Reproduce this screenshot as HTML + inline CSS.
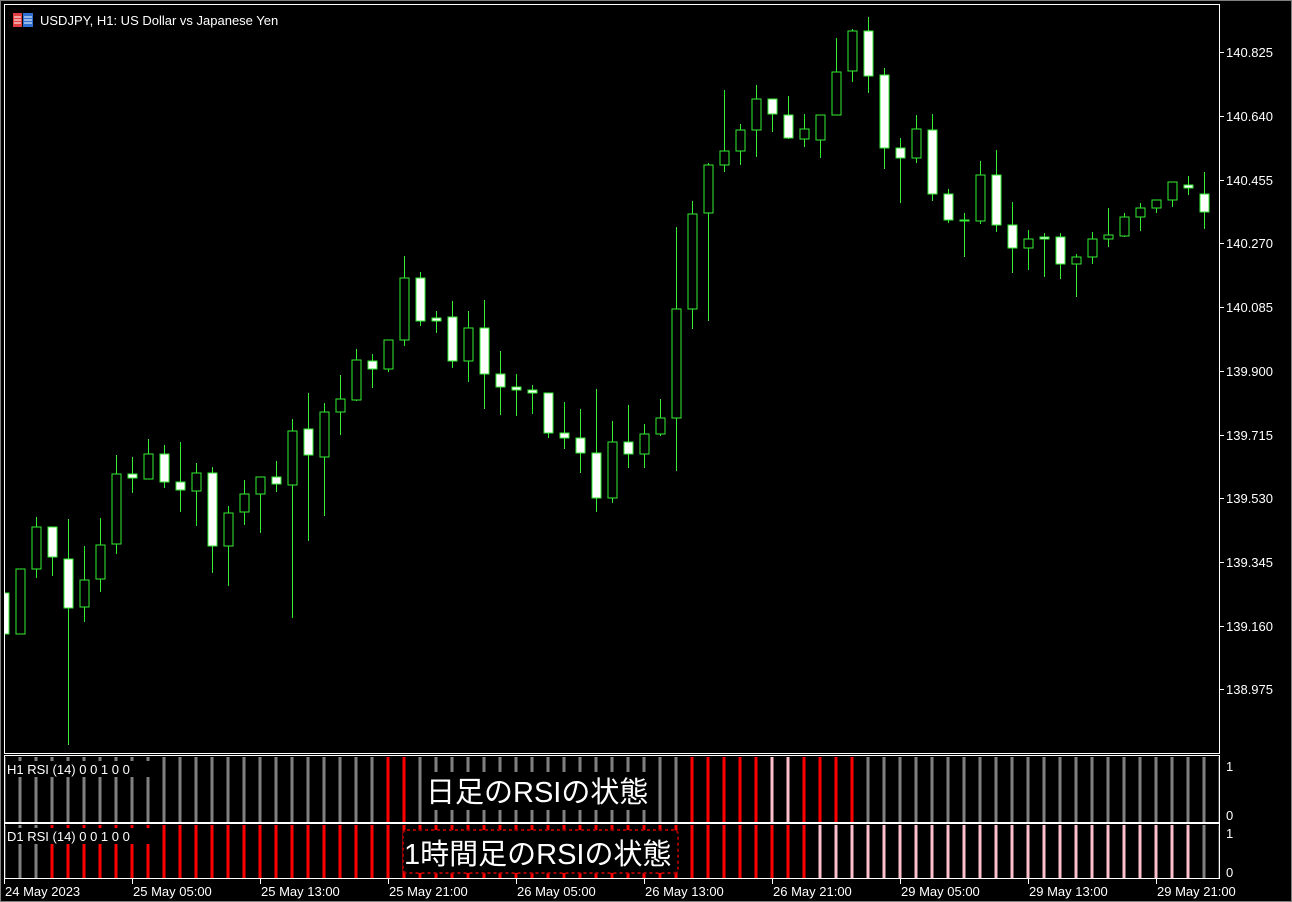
<!DOCTYPE html>
<html><head><meta charset="utf-8"><style>
html,body{margin:0;padding:0;background:#000;width:1292px;height:902px;overflow:hidden}
svg{display:block}
text{font-family:"Liberation Sans","Noto Sans CJK JP",sans-serif;fill:#fff}
</style></head><body>
<svg width="1292" height="902" viewBox="0 0 1292 902" xmlns="http://www.w3.org/2000/svg">
<defs>
<pattern id="pg" patternUnits="userSpaceOnUse" x="18.5" y="0" width="16" height="10"><rect x="0" y="0" width="3" height="10" fill="#808080"/></pattern>
<pattern id="pr" patternUnits="userSpaceOnUse" x="18.5" y="0" width="16" height="10"><rect x="0" y="0" width="3" height="10" fill="#ff0000"/></pattern>
<pattern id="pp" patternUnits="userSpaceOnUse" x="18.5" y="0" width="16" height="10"><rect x="0" y="0" width="3" height="10" fill="#ffc0cb"/></pattern>
<clipPath id="cc"><rect x="5" y="5" width="1214" height="748"/></clipPath>
</defs>
<rect width="1292" height="902" fill="#000"/>
<rect x="0.5" y="0.5" width="1291" height="901" fill="none" stroke="#808080"/>
<rect x="4.5" y="4.5" width="1215" height="749" fill="none" stroke="#fff"/>
<rect x="13" y="13" width="9" height="14" fill="#e04040"/>
<rect x="23" y="13" width="10" height="14" fill="#3070d0"/>
<path d="M14 17h7M14 20h7M14 23h7M24 17h8M24 20h8M24 23h8" stroke="#fff" stroke-width="1"/>
<text x="40" y="25" font-size="13">USDJPY, H1:  US Dollar vs Japanese Yen</text>
<g clip-path="url(#cc)" stroke="#33ee33" stroke-width="1" shape-rendering="crispEdges">
<line x1="4.5" x2="4.5" y1="593" y2="634"/><rect x="0" y="593" width="9" height="41" fill="#fff"/>
<line x1="20.5" x2="20.5" y1="569" y2="634"/><rect x="16" y="569" width="9" height="65" fill="#000"/>
<line x1="36.5" x2="36.5" y1="517" y2="578"/><rect x="32" y="527" width="9" height="42" fill="#000"/>
<line x1="52.5" x2="52.5" y1="527" y2="576"/><rect x="48" y="527" width="9" height="30" fill="#fff"/>
<line x1="68.5" x2="68.5" y1="519" y2="745"/><rect x="64" y="559" width="9" height="49" fill="#fff"/>
<line x1="84.5" x2="84.5" y1="546" y2="622"/><rect x="80" y="580" width="9" height="27" fill="#000"/>
<line x1="100.5" x2="100.5" y1="518" y2="592"/><rect x="96" y="545" width="9" height="34" fill="#000"/>
<line x1="116.5" x2="116.5" y1="455" y2="554"/><rect x="112" y="474" width="9" height="70" fill="#000"/>
<line x1="132.5" x2="132.5" y1="457" y2="493"/><rect x="128" y="474" width="9" height="4" fill="#fff"/>
<line x1="148.5" x2="148.5" y1="439" y2="479"/><rect x="144" y="454" width="9" height="25" fill="#000"/>
<line x1="164.5" x2="164.5" y1="445" y2="488"/><rect x="160" y="454" width="9" height="28" fill="#fff"/>
<line x1="180.5" x2="180.5" y1="442" y2="512"/><rect x="176" y="482" width="9" height="8" fill="#fff"/>
<line x1="196.5" x2="196.5" y1="463" y2="526"/><rect x="192" y="473" width="9" height="18" fill="#000"/>
<line x1="212.5" x2="212.5" y1="467" y2="573"/><rect x="208" y="473" width="9" height="73" fill="#fff"/>
<line x1="228.5" x2="228.5" y1="506" y2="586"/><rect x="224" y="513" width="9" height="33" fill="#000"/>
<line x1="244.5" x2="244.5" y1="480" y2="525"/><rect x="240" y="494" width="9" height="18" fill="#000"/>
<line x1="260.5" x2="260.5" y1="477" y2="533"/><rect x="256" y="477" width="9" height="17" fill="#000"/>
<line x1="276.5" x2="276.5" y1="461" y2="492"/><rect x="272" y="477" width="9" height="7" fill="#fff"/>
<line x1="292.5" x2="292.5" y1="419" y2="618"/><rect x="288" y="431" width="9" height="54" fill="#000"/>
<line x1="308.5" x2="308.5" y1="393" y2="541"/><rect x="304" y="429" width="9" height="26" fill="#fff"/>
<line x1="324.5" x2="324.5" y1="403" y2="516"/><rect x="320" y="412" width="9" height="45" fill="#000"/>
<line x1="340.5" x2="340.5" y1="375" y2="435"/><rect x="336" y="399" width="9" height="13" fill="#000"/>
<line x1="356.5" x2="356.5" y1="349" y2="401"/><rect x="352" y="360" width="9" height="40" fill="#000"/>
<line x1="372.5" x2="372.5" y1="354" y2="388"/><rect x="368" y="361" width="9" height="8" fill="#fff"/>
<line x1="388.5" x2="388.5" y1="340" y2="372"/><rect x="384" y="340" width="9" height="29" fill="#000"/>
<line x1="404.5" x2="404.5" y1="256" y2="346"/><rect x="400" y="278" width="9" height="62" fill="#000"/>
<line x1="420.5" x2="420.5" y1="272" y2="326"/><rect x="416" y="278" width="9" height="43" fill="#fff"/>
<line x1="436.5" x2="436.5" y1="311" y2="333"/><rect x="432" y="318" width="9" height="3" fill="#fff"/>
<line x1="452.5" x2="452.5" y1="301" y2="368"/><rect x="448" y="317" width="9" height="44" fill="#fff"/>
<line x1="468.5" x2="468.5" y1="311" y2="382"/><rect x="464" y="328" width="9" height="33" fill="#000"/>
<line x1="484.5" x2="484.5" y1="300" y2="409"/><rect x="480" y="328" width="9" height="46" fill="#fff"/>
<line x1="500.5" x2="500.5" y1="351" y2="415"/><rect x="496" y="374" width="9" height="13" fill="#fff"/>
<line x1="516.5" x2="516.5" y1="374" y2="416"/><rect x="512" y="387" width="9" height="3" fill="#fff"/>
<line x1="532.5" x2="532.5" y1="385" y2="414"/><rect x="528" y="390" width="9" height="3" fill="#fff"/>
<line x1="548.5" x2="548.5" y1="393" y2="438"/><rect x="544" y="393" width="9" height="40" fill="#fff"/>
<line x1="564.5" x2="564.5" y1="402" y2="449"/><rect x="560" y="433" width="9" height="5" fill="#fff"/>
<line x1="580.5" x2="580.5" y1="409" y2="473"/><rect x="576" y="438" width="9" height="15" fill="#fff"/>
<line x1="596.5" x2="596.5" y1="389" y2="512"/><rect x="592" y="453" width="9" height="45" fill="#fff"/>
<line x1="612.5" x2="612.5" y1="421" y2="503"/><rect x="608" y="442" width="9" height="56" fill="#000"/>
<line x1="628.5" x2="628.5" y1="405" y2="468"/><rect x="624" y="442" width="9" height="12" fill="#fff"/>
<line x1="644.5" x2="644.5" y1="424" y2="468"/><rect x="640" y="434" width="9" height="20" fill="#000"/>
<line x1="660.5" x2="660.5" y1="399" y2="436"/><rect x="656" y="418" width="9" height="16" fill="#000"/>
<line x1="676.5" x2="676.5" y1="227" y2="471"/><rect x="672" y="309" width="9" height="109" fill="#000"/>
<line x1="692.5" x2="692.5" y1="201" y2="329"/><rect x="688" y="214" width="9" height="95" fill="#000"/>
<line x1="708.5" x2="708.5" y1="163" y2="321"/><rect x="704" y="165" width="9" height="48" fill="#000"/>
<line x1="724.5" x2="724.5" y1="90" y2="172"/><rect x="720" y="151" width="9" height="14" fill="#000"/>
<line x1="740.5" x2="740.5" y1="124" y2="165"/><rect x="736" y="130" width="9" height="21" fill="#000"/>
<line x1="756.5" x2="756.5" y1="85" y2="157"/><rect x="752" y="99" width="9" height="31" fill="#000"/>
<line x1="772.5" x2="772.5" y1="99" y2="132"/><rect x="768" y="99" width="9" height="15" fill="#fff"/>
<line x1="788.5" x2="788.5" y1="96" y2="139"/><rect x="784" y="115" width="9" height="23" fill="#fff"/>
<line x1="804.5" x2="804.5" y1="114" y2="147"/><rect x="800" y="129" width="9" height="10" fill="#000"/>
<line x1="820.5" x2="820.5" y1="115" y2="158"/><rect x="816" y="115" width="9" height="25" fill="#000"/>
<line x1="836.5" x2="836.5" y1="38" y2="115"/><rect x="832" y="72" width="9" height="43" fill="#000"/>
<line x1="852.5" x2="852.5" y1="29" y2="82"/><rect x="848" y="31" width="9" height="40" fill="#000"/>
<line x1="868.5" x2="868.5" y1="17" y2="93"/><rect x="864" y="31" width="9" height="45" fill="#fff"/>
<line x1="884.5" x2="884.5" y1="68" y2="169"/><rect x="880" y="75" width="9" height="73" fill="#fff"/>
<line x1="900.5" x2="900.5" y1="138" y2="203"/><rect x="896" y="148" width="9" height="10" fill="#fff"/>
<line x1="916.5" x2="916.5" y1="115" y2="163"/><rect x="912" y="129" width="9" height="29" fill="#000"/>
<line x1="932.5" x2="932.5" y1="114" y2="201"/><rect x="928" y="130" width="9" height="64" fill="#fff"/>
<line x1="948.5" x2="948.5" y1="189" y2="223"/><rect x="944" y="194" width="9" height="26" fill="#fff"/>
<line x1="964.5" x2="964.5" y1="213" y2="257"/><rect x="960" y="220" width="9" height="1" fill="#fff"/>
<line x1="980.5" x2="980.5" y1="161" y2="224"/><rect x="976" y="175" width="9" height="46" fill="#000"/>
<line x1="996.5" x2="996.5" y1="150" y2="232"/><rect x="992" y="175" width="9" height="50" fill="#fff"/>
<line x1="1012.5" x2="1012.5" y1="202" y2="273"/><rect x="1008" y="225" width="9" height="23" fill="#fff"/>
<line x1="1028.5" x2="1028.5" y1="230" y2="270"/><rect x="1024" y="239" width="9" height="9" fill="#000"/>
<line x1="1044.5" x2="1044.5" y1="233" y2="277"/><rect x="1040" y="237" width="9" height="2" fill="#fff"/>
<line x1="1060.5" x2="1060.5" y1="233" y2="279"/><rect x="1056" y="237" width="9" height="27" fill="#fff"/>
<line x1="1076.5" x2="1076.5" y1="254" y2="297"/><rect x="1072" y="257" width="9" height="7" fill="#000"/>
<line x1="1092.5" x2="1092.5" y1="232" y2="264"/><rect x="1088" y="239" width="9" height="18" fill="#000"/>
<line x1="1108.5" x2="1108.5" y1="208" y2="247"/><rect x="1104" y="235" width="9" height="4" fill="#000"/>
<line x1="1124.5" x2="1124.5" y1="213" y2="237"/><rect x="1120" y="217" width="9" height="19" fill="#000"/>
<line x1="1140.5" x2="1140.5" y1="203" y2="231"/><rect x="1136" y="208" width="9" height="9" fill="#000"/>
<line x1="1156.5" x2="1156.5" y1="200" y2="213"/><rect x="1152" y="200" width="9" height="8" fill="#000"/>
<line x1="1172.5" x2="1172.5" y1="182" y2="207"/><rect x="1168" y="182" width="9" height="18" fill="#000"/>
<line x1="1188.5" x2="1188.5" y1="176" y2="195"/><rect x="1184" y="185" width="9" height="3" fill="#fff"/>
<line x1="1204.5" x2="1204.5" y1="172" y2="229"/><rect x="1200" y="194" width="9" height="18" fill="#fff"/>
</g>
<g font-size="13">
<text x="1226" y="57">140.825</text>
<text x="1226" y="121">140.640</text>
<text x="1226" y="185">140.455</text>
<text x="1226" y="248">140.270</text>
<text x="1226" y="312">140.085</text>
<text x="1226" y="376">139.900</text>
<text x="1226" y="440">139.715</text>
<text x="1226" y="503">139.530</text>
<text x="1226" y="567">139.345</text>
<text x="1226" y="631">139.160</text>
<text x="1226" y="694">138.975</text>
</g>
<path d="M1220 52.5h4M1220 116.5h4M1220 180.5h4M1220 243.5h4M1220 307.5h4M1220 371.5h4M1220 435.5h4M1220 498.5h4M1220 562.5h4M1220 626.5h4M1220 689.5h4" stroke="#fff"/>
<rect x="4" y="757" width="1216" height="65" fill="url(#pg)"/>
<rect x="386" y="757" width="32" height="65" fill="url(#pr)"/>
<rect x="690" y="757" width="80" height="65" fill="url(#pr)"/>
<rect x="770" y="757" width="32" height="65" fill="url(#pp)"/>
<rect x="802" y="757" width="64" height="65" fill="url(#pr)"/>
<rect x="4.5" y="755.5" width="1215" height="67" fill="none" stroke="#fff"/>
<rect x="6" y="761" width="150" height="16" fill="#000"/>
<text x="7" y="774" font-size="13">H1 RSI (14) 0 0 1 0 0</text>
<rect x="425" y="772" width="224" height="38" fill="#000"/>
<text x="426" y="802" font-size="29">日足のRSIの状態</text>
<text x="1226" y="771" font-size="13">1</text>
<text x="1226" y="820" font-size="13">0</text>
<rect x="4" y="825" width="814" height="53" fill="url(#pr)"/>
<rect x="4" y="825" width="46" height="53" fill="#000"/>
<rect x="4" y="825" width="46" height="53" fill="url(#pg)"/>
<rect x="818" y="825" width="384" height="53" fill="url(#pp)"/>
<rect x="1202" y="825" width="18" height="53" fill="url(#pg)"/>
<rect x="4.5" y="823.5" width="1215" height="55" fill="none" stroke="#fff"/>
<rect x="6" y="828" width="150" height="16" fill="#000"/>
<text x="7" y="841" font-size="13">D1 RSI (14) 0 0 1 0 0</text>
<rect x="403" y="830" width="275" height="43" rx="4" fill="#000" stroke="#a00000" stroke-width="2" stroke-dasharray="3 3"/>
<text x="404" y="864" font-size="29">1時間足のRSIの状態</text>
<text x="1226" y="838" font-size="13">1</text>
<text x="1226" y="877" font-size="13">0</text>
<path d="M4.5 878v6M132.5 878v6M260.5 878v6M388.5 878v6M516.5 878v6M644.5 878v6M772.5 878v6M900.5 878v6M1028.5 878v6M1156.5 878v6" stroke="#fff"/>
<g font-size="13">
<text x="5" y="896">24 May 2023</text>
<text x="133" y="896">25 May 05:00</text>
<text x="261" y="896">25 May 13:00</text>
<text x="389" y="896">25 May 21:00</text>
<text x="517" y="896">26 May 05:00</text>
<text x="645" y="896">26 May 13:00</text>
<text x="773" y="896">26 May 21:00</text>
<text x="901" y="896">29 May 05:00</text>
<text x="1029" y="896">29 May 13:00</text>
<text x="1157" y="896">29 May 21:00</text>
</g>
</svg>
</body></html>
